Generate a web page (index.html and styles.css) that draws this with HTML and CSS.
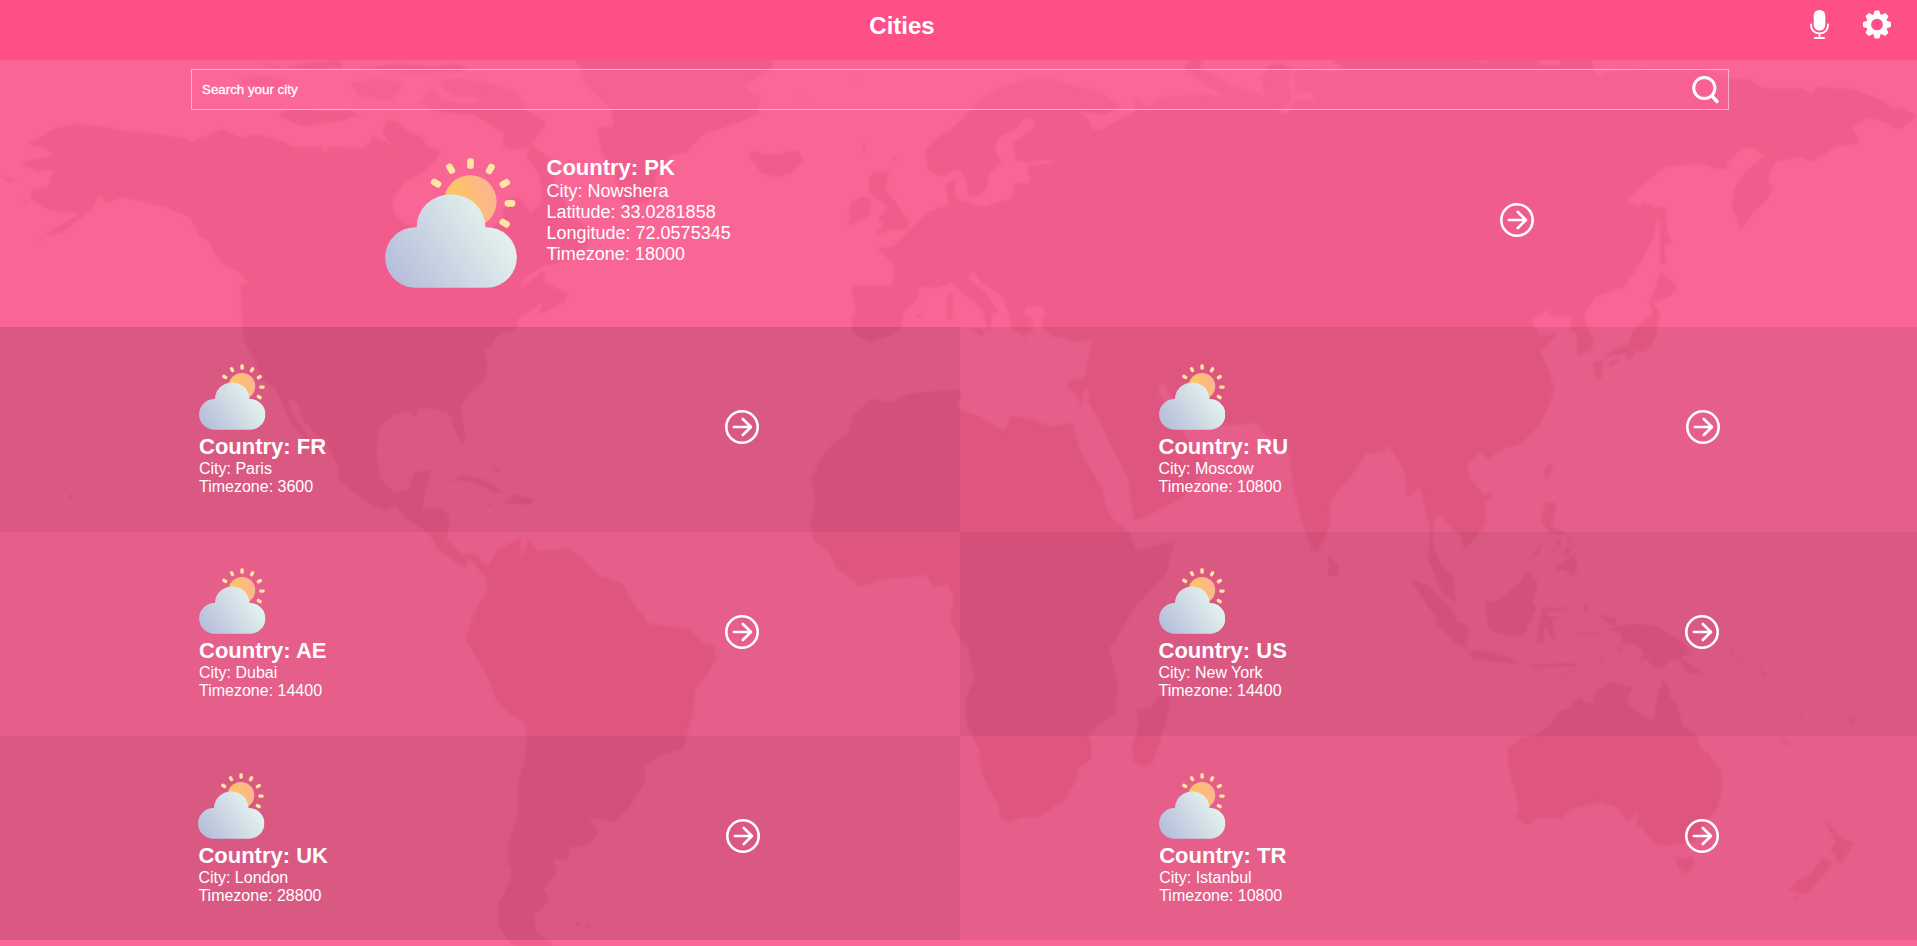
FILE: index.html
```html
<!DOCTYPE html>
<html lang="en">
<head>
<meta charset="utf-8">
<title>Cities</title>
<link rel="stylesheet" href="styles.css">
</head>
<body>
<svg class="defs" width="0" height="0" aria-hidden="true">
  <defs>
    <linearGradient id="sunFill" x1="0" y1="0.6" x2="1" y2="0.3"><stop offset="0.1" stop-color="#fcc75c"/><stop offset="0.9" stop-color="#fcb68e"/></linearGradient>
    <linearGradient id="cloudFill" gradientUnits="userSpaceOnUse" x1="50" y1="380" x2="330" y2="190"><stop offset="0" stop-color="#b7bfdb"/><stop offset="1" stop-color="#e2f1ed"/></linearGradient>
    <symbol id="weather" viewBox="0 0 396 389">
      <g fill="#fde7a2">
        <rect id="ray" x="246.5" y="0" width="20" height="32" rx="8.5"/>
        <use href="#ray" transform="rotate(-60 256 135)"/>
        <use href="#ray" transform="rotate(-30 256 135)"/>
        <use href="#ray" transform="rotate(30 256 135)"/>
        <use href="#ray" transform="rotate(60 256 135)"/>
        <use href="#ray" transform="rotate(90 256 135)"/>
        <use href="#ray" transform="rotate(120 256 135)"/>
      </g>
      <circle cx="256" cy="130" r="79" fill="url(#sunFill)"/>
      <path fill="url(#cloudFill)" d="M88 389A91 91 0 0 1 95 207A103 99 0 0 1 301 207A91 91 0 0 1 308 389Z"/>
    </symbol>
    <symbol id="arrow" viewBox="0 0 34 34">
      <g fill="none" stroke="#fff" stroke-width="2.6" stroke-linecap="round" stroke-linejoin="round"><circle cx="17" cy="17" r="15.7"/><path d="M8.8 17H25.5M17.8 9L26 17L17.8 25"/></g>
    </symbol>
  </defs>
</svg>

<div class="page">
  <svg class="map" viewBox="0 0 1917 946" aria-hidden="true">
    <!-- north-west: Alaska, Canada, Greenland edge -->
    <g transform="scale(.40816 .33333)">
      <path d="M65 430L100 410L130 388L190 372L240 378L300 392L370 400L450 415L470 426L525 392L480 425L545 388L590 414L625 402L700 428L715 442L790 440L798 468L802 440L890 444L905 428L915 410L945 425L960 440L935 390L950 362L975 365L1000 395L1035 410L1045 440L1080 450L1070 480L1030 520L990 550L960 600L965 640L990 668L1050 690L1200 690L1230 660L1240 600L1270 590L1300 640L1330 600L1320 520L1290 470L1300 430L1350 480L1360 560L1400 640L1450 700L1440 735L1400 780L1330 800L1290 830L1260 880L1330 812L1338 850L1390 880L1385 905L1320 945L1330 905L1260 965L1258 992L595 992L588 855L608 850L585 815L540 790L510 720L490 710L465 650L400 620L320 598L300 590L265 610L245 585L225 630L180 670L150 700L130 700L92 722L140 680L200 640L150 635L110 625L78 600L75 570L120 560L130 510L90 515L50 490L130 465L100 440Z"/>
      <path d="M1410 150L1410 180L1440 260L1490 320L1500 345L1502 380L1460 385L1475 460L1510 540L1520 600L1545 630L1580 600L1580 150Z"/>
      <path d="M610 180L680 205L740 190L830 178L840 205L760 208L690 200ZM880 205L980 190L1060 200L1110 190L1145 200L1130 215L1000 218ZM680 345L720 322L800 335L860 330L880 345L830 365L740 378L710 362ZM590 240L640 225L700 240L720 280L650 270ZM860 250L930 235L990 250L960 300L880 290ZM1030 310L1070 335L1160 345L1235 400L1232 440L1250 450L1300 440L1370 490L1350 492L1290 440L1310 420L1340 370L1290 330L1270 280L1200 250L1120 235L1070 245L1110 290L1180 290L1160 315L1080 300L1060 260ZM0 530L40 540L20 545ZM55 600L75 605L60 610Z"/>
    </g>
    <!-- north: Greenland, Iceland, Europe, west Asia -->
    <g transform="translate(640 0) scale(.40816 .33333)">
      <path d="M-10 150L320 150L328 200L265 250L262 275L295 290L290 345L200 385L160 400L130 435L110 460L75 465L40 520L35 590L10 610L-10 580ZM265 470L285 450L300 465L345 462L385 448L400 485L370 520L335 532L295 518L285 495ZM560 530L575 515L612 518L600 570L630 610L645 645L662 660L655 690L610 690L570 710L600 672L580 660L605 620L560 575ZM515 610L545 590L568 600L560 650L510 678ZM395 290L412 296L400 298ZM520 235L538 232L530 240ZM620 475L630 465L625 485ZM545 435L555 435L550 455Z"/>
      <path d="M700 450L720 420L760 390L800 345L830 300L880 265L940 240L1000 235L1060 255L1130 280L1180 320L1140 345L1075 335L1100 360L1110 388L1130 390L1165 365L1210 335L1215 295L1240 320L1280 290L1390 285L1430 290L1385 250L1330 205L1350 178L1380 178L1370 205L1440 250L1535 290L1520 240L1540 195L1580 190L1580 995L990 995L990 920L950 920L940 935L965 995L915 995L900 930L885 885L835 850L815 810L803 835L850 880L880 940L865 940L855 995L845 960L840 930L790 880L765 845L730 865L700 860L685 865L680 900L650 930L635 995L518 995L528 930L518 870L530 855L618 858L625 800L600 765L580 745L620 740L660 690L700 640L755 615L750 550L778 540L770 570L780 600L840 620L912 595L915 550L955 550L950 500L1020 485L1010 478L950 490L920 480L915 430L965 385L970 360L940 355L920 390L880 410L868 440L885 490L855 520L850 560L830 590L805 590L800 540L780 505L740 530L705 510ZM755 880L765 880L765 955L752 960ZM675 945L695 940L680 955Z"/>
    </g>
    <!-- north-east: Siberia, Kamchatka, China -->
    <g transform="translate(1277 0) scale(.40816 .33333)">
      <path d="M-5 190L50 205L135 210L135 160L770 160L775 205L790 232L810 215L900 205L1040 205L1110 235L1160 240L1190 265L1290 265L1310 283L1320 262L1410 267L1480 300L1510 325L1530 325L1567 348L1530 385L1510 385L1490 365L1450 355L1410 380L1428 430L1370 440L1310 485L1280 470L1220 488L1200 540L1218 560L1200 600L1165 640L1135 690L1115 620L1120 570L1145 520L1200 460L1232 430L1190 465L1170 445L1140 445L1100 490L1110 505L1080 508L1040 490L950 500L855 600L885 620L900 605L940 630L920 720L890 790L850 860L815 875L780 890L750 945L765 995L-5 995ZM935 620L955 620L955 690L968 730L948 740L955 790L940 795L938 740ZM940 815L983 860L960 890L920 905L938 940L930 995L905 995L920 940L912 900L925 870Z"/>
      <path class="sea" d="M15 180L135 180L160 207L130 214L48 198L42 240L50 282L88 276L97 305L50 302L25 338L3 342L36 300L28 245L38 205ZM475 178L525 180L510 185ZM635 178L695 178L690 195L650 195ZM625 960L675 920L665 945L720 950L718 995L620 995Z"/>
    </g>
    <!-- west: United States, Mexico, Caribbean, Colombia -->
    <g transform="translate(0 320) scale(.40816 .33333)">
      <path d="M590 -10L600 70L625 120L640 180L675 205L700 280L720 320L770 385L775 420L780 395L745 330L715 280L708 238L730 250L740 300L780 350L808 390L828 440L828 480L860 510L900 545L938 572L970 560L1000 600L1050 640L1075 690L1110 720L1140 745L1150 715L1190 770L1195 810L1170 860L1150 920L1140 970L1580 970L1580 890L1550 850L1525 790L1470 770L1430 720L1390 685L1320 695L1295 660L1290 680L1275 712L1275 655L1220 690L1195 740L1160 700L1130 705L1095 660L1102 590L1080 562L1035 568L1045 500L1057 450L1015 455L1000 510L965 515L935 480L922 400L930 320L965 285L1000 275L1020 290L1025 268L1060 265L1100 280L1110 320L1130 370L1142 360L1128 260L1150 220L1190 175L1195 130L1185 75L1200 90L1220 45L1270 22L1262 -10Z"/>
      <path d="M1100 490L1130 465L1180 475L1235 518L1205 515L1170 492L1130 480ZM1235 550L1260 522L1310 538L1300 555ZM1185 545L1208 552L1195 560ZM1325 548L1340 550L1330 557ZM1175 400L1200 395L1180 405ZM1185 425L1195 445L1188 445ZM1205 435L1225 450L1215 460ZM115 478L122 485L118 490ZM150 495L170 505L155 507ZM172 520L182 535L170 540Z"/>
    </g>
    <!-- centre: Brazil edge, Africa, Arabia, India -->
    <g transform="translate(640 320) scale(.40816 .33333)">
      <path d="M-10 875L20 910L60 930L100 930L150 970L-10 970ZM518 -10L525 45L565 68L620 45L642 -10ZM805 25L840 30L840 52ZM910 -10L945 62L940 20L965 10L960 -10ZM985 -10L985 20L1010 50L1040 50L1060 68L1110 55L1100 110L1090 175L1050 182L1045 200L1065 215L1080 255L1085 215L1100 205L1100 250L1130 310L1160 390L1195 470L1210 600L1250 585L1330 530L1370 470L1385 430L1340 360L1300 270L1270 220L1270 195L1285 190L1300 230L1340 280L1400 330L1430 315L1510 310L1530 340L1580 370L1580 -10Z"/>
      <path d="M565 235L610 247L660 220L780 208L788 225L775 265L830 290L890 332L910 288L960 300L1010 322L1060 310L1080 400L1130 500L1140 560L1160 600L1200 640L1215 690L1310 663L1290 760L1215 860L1160 970L790 970L760 900L770 830L755 795L720 798L700 765L590 778L540 800L480 740L465 700L425 660L415 610L430 540L418 480L440 420L470 375L510 340L520 290ZM1340 652L1358 652L1345 658Z"/>
    </g>
    <!-- east: India, south-east Asia, Japan -->
    <g transform="translate(1277 320) scale(.40816 .33333)">
      <path d="M-5 -10L620 -10L640 45L685 42L645 95L665 150L680 205L665 260L640 320L600 370L545 390L520 418L500 395L465 430L475 480L505 525L530 520L510 550L510 610L490 650L457 690L450 650L430 630L400 580L385 600L380 660L400 730L432 770L440 852L405 820L370 720L375 620L350 500L325 530L315 520L315 460L275 375L260 395L220 400L180 470L130 540L128 620L100 700L85 690L60 600L40 500L30 400L-5 370ZM720 -10L745 -10L775 60L770 90L735 108L735 50ZM905 -10L932 -10L925 60L900 95L880 90L860 125L855 103L800 110L830 85L860 75L870 40ZM775 130L800 120L795 175L785 182ZM812 130L838 112L832 130L815 142ZM653 450L678 425L662 482ZM125 700L152 740L148 770L125 768Z"/>
      <path d="M658 548L682 548L680 590L670 620L705 635L700 645L665 640L648 600ZM612 728L655 655L640 700ZM680 650L695 665L690 685ZM705 640L725 665L715 670ZM675 680L690 700L680 700ZM712 680L720 690L705 715L700 705ZM680 750L695 728L728 705L738 745L725 775L705 750ZM325 775L350 785L380 805L430 870L440 900L470 930L465 970L435 970L370 860ZM508 845L545 840L600 780L612 750L640 790L625 850L637 862L605 950L560 945L520 930ZM650 860L700 865L718 850L705 873L660 872L665 890L695 890L675 905L685 970L670 930L655 900L650 970L635 970ZM750 850L765 855L755 885ZM785 880L830 895L835 915L815 915ZM845 945L870 940L885 912L930 930L990 970L840 970ZM705 910L725 908L710 915ZM735 940L790 935L785 945L740 945ZM330 820L345 840L335 835ZM355 875L370 905L360 895ZM460 910L475 930L465 930Z"/>
    </g>
    <!-- south-west: South America -->
    <g transform="translate(0 626) scale(.40816 .33333)">
      <path d="M1155 -10L1145 40L1160 80L1195 150L1215 220L1235 250L1285 290L1292 330L1285 400L1270 460L1270 560L1245 650L1242 700L1255 740L1235 800L1220 830L1222 900L1240 935L1265 970L1360 970L1350 950L1315 920L1308 870L1348 820L1330 790L1365 740L1355 700L1390 702L1395 665L1440 660L1468 625L1445 575L1500 590L1540 550L1580 470L1580 -10ZM1402 895L1425 885L1420 900ZM1430 910L1450 885L1445 905Z"/>
    </g>
    <!-- south: Brazil edge, southern Africa, Madagascar -->
    <g transform="translate(640 626) scale(.40816 .33333)">
      <path d="M-10 -10L120 10L150 50L180 60L187 100L160 150L135 190L130 260L105 370L60 385L10 420L0 480L-10 490ZM765 -10L800 60L820 150L795 230L800 290L830 370L840 450L880 540L885 580L905 590L930 575L980 570L1040 520L1070 460L1070 430L1105 400L1105 350L1098 325L1165 260L1172 180L1150 70L1180 -10ZM1270 210L1298 208L1298 250L1275 340L1255 410L1235 423L1210 405L1205 360L1220 300L1218 250L1250 248Z"/>
    </g>
    <!-- south-east: Indonesia, Australia, New Zealand -->
    <g transform="translate(1277 626) scale(.40816 .33333)">
      <path d="M385 -10L465 -10L467 65L450 60L400 5ZM520 -10L605 -10L600 30L530 20ZM640 -10L655 60L655 0L688 60L670 -10ZM465 75L500 72L570 95L608 115L550 110L480 98ZM610 118L680 112L740 110L720 122L630 125ZM690 155L740 115L720 140ZM638 135L660 145L650 145ZM730 20L790 20L750 28ZM835 60L845 60L838 88ZM790 95L803 95L798 108ZM810 5L860 -5L920 -5L985 40L1015 80L990 95L1050 150L1010 140L980 100L960 105L945 130L920 122L905 100L885 110L900 80L860 35Z"/>
      <path d="M565 370L600 335L635 325L670 300L685 260L715 245L740 212L760 235L775 225L778 195L800 180L820 168L872 185L855 225L880 255L922 283L930 220L945 155L958 180L965 220L978 225L995 300L1028 330L1035 370L1055 380L1085 430L1092 475L1080 540L1045 600L1020 650L980 650L960 660L920 650L895 600L880 600L885 555L860 588L835 545L790 527L750 540L720 550L700 575L640 575L615 597L585 578L595 550L575 460L568 420ZM975 692L1000 700L1020 690L1020 725L1000 745L985 725ZM1340 580L1360 605L1375 630L1395 645L1415 645L1400 675L1385 710L1368 708L1370 685L1355 672L1370 650ZM1335 695L1360 710L1340 745L1320 770L1300 805L1255 792L1275 765L1310 745ZM1105 55L1118 85L1112 85ZM1128 95L1150 118L1135 110ZM1165 100L1175 115L1168 112ZM1180 115L1205 155L1192 148ZM1225 320L1265 365L1245 350ZM1260 230L1275 240L1268 240ZM1280 235L1285 280L1280 270ZM1405 270L1418 285L1405 290ZM1420 262L1435 255L1428 265ZM1270 810L1278 812L1272 825Z"/>
    </g>
  </svg>

  <header class="topbar">
    <h1 class="title">Cities</h1>
    <div class="tools">
      <svg class="mic" viewBox="0 0 19 29"><rect x="3.7" y="0" width="11.6" height="20.6" rx="5.5" fill="#fff"/><path fill="none" stroke="#fff" stroke-width="1.9" stroke-linecap="round" d="M1 14.5C1 20.6 5 23.4 9.5 23.4S18 20.6 18 14.5M9.5 23.6V28M4.8 28H14.2"/></svg>
      <svg class="gear" viewBox="-14.3 -14.5 28.6 29">
        <mask id="hub" maskUnits="userSpaceOnUse" x="-15" y="-15" width="30" height="30"><rect x="-15" y="-15" width="30" height="30" fill="#fff"/><circle r="6" fill="#000"/></mask>
        <g fill="#fff" mask="url(#hub)">
          <circle r="10.8"/>
          <path id="tooth" d="M-4 -9L-2.7 -13.4Q-2.5 -14.3 -1.6 -14.3H1.6Q2.5 -14.3 2.7 -13.4L4 -9V9L2.7 13.4Q2.5 14.3 1.6 14.3H-1.6Q-2.5 14.3 -2.7 13.4L-4 9Z"/>
          <use href="#tooth" transform="rotate(45)"/><use href="#tooth" transform="rotate(90)"/><use href="#tooth" transform="rotate(135)"/>
        </g>
      </svg>
    </div>
  </header>

  <section class="current">
    <div class="search">
      <input class="field" type="text" placeholder="Search your city">
      <svg class="lens" viewBox="0 0 28 28"><g fill="none" stroke="#fff" stroke-width="3"><circle cx="12.3" cy="12" r="10.6"/><path stroke-width="3.4" stroke-linecap="round" d="M20 20L25 25.5"/></g></svg>
    </div>
    <div class="hero">
      <svg class="hero-icon"><use href="#weather"/></svg>
      <div class="info large"><h2>Country: PK</h2><p>City: Nowshera</p><p>Latitude: 33.0281858</p><p>Longitude: 72.0575345</p><p>Timezone: 18000</p></div>
      <svg class="arrow"><use href="#arrow"/></svg>
    </div>
  </section>

  <section class="cities">
    <article class="city dark"><div class="info"><svg class="icon"><use href="#weather"/></svg><h2>Country: FR</h2><p>City: Paris</p><p>Timezone: 3600</p></div><svg class="arrow"><use href="#arrow"/></svg></article>
    <article class="city"><div class="info"><svg class="icon"><use href="#weather"/></svg><h2>Country: RU</h2><p>City: Moscow</p><p>Timezone: 10800</p></div><svg class="arrow"><use href="#arrow"/></svg></article>
    <article class="city middle"><div class="info"><svg class="icon"><use href="#weather"/></svg><h2>Country: AE</h2><p>City: Dubai</p><p>Timezone: 14400</p></div><svg class="arrow"><use href="#arrow"/></svg></article>
    <article class="city dark middle"><div class="info"><svg class="icon"><use href="#weather"/></svg><h2>Country: US</h2><p>City: New York</p><p>Timezone: 14400</p></div><svg class="arrow"><use href="#arrow"/></svg></article>
    <article class="city dark last"><div class="info"><svg class="icon"><use href="#weather"/></svg><h2>Country: UK</h2><p>City: London</p><p>Timezone: 28800</p></div><svg class="arrow"><use href="#arrow"/></svg></article>
    <article class="city last"><div class="info"><svg class="icon"><use href="#weather"/></svg><h2>Country: TR</h2><p>City: Istanbul</p><p>Timezone: 10800</p></div><svg class="arrow"><use href="#arrow"/></svg></article>
  </section>
</div>
</body>
</html>
```

FILE: styles.css
```css
* { box-sizing: border-box; margin: 0; padding: 0; }
body { background: #f96696; color: #fff; font-family: Arial, "Liberation Sans", sans-serif; overflow: hidden; }
svg { display: block; flex: none; }
.defs { position: absolute; }
.page { position: relative; width: 1917px; height: 946px; overflow: hidden; isolation: isolate; }
.map { position: absolute; inset: 0; width: 1917px; height: 946px; z-index: -1; fill: #f05c8b; filter: blur(.8px); }
.sea { fill: #f96696; }

.topbar { display: grid; grid-template-columns: 1fr auto 1fr; height: 60px; padding: 10px 26px 0 0; background: #ff4f87; }
.title { grid-column: 2; margin-right: 87px; font-size: 24px; line-height: 31px; }
.tools { display: flex; justify-content: flex-end; gap: 34px; }
.mic { width: 19px; height: 29px; overflow: visible; }
.gear { width: 28px; height: 29px; }

.current { height: 267px; padding-top: 9px; }
.search { display: flex; align-items: center; width: 1538px; height: 41px; margin-left: 191px; padding: 0 8px 0 10px; border: 1px solid rgba(255, 255, 255, .5); background: rgba(255, 104, 154, .4); }
.field { flex: 1; border: 0; outline: 0; background: none; color: #fff; font: 13.333px Arial, "Liberation Sans", sans-serif; -webkit-text-stroke: .3px #fff; }
.field::placeholder { color: #fff; opacity: 1; }
.lens { width: 28px; height: 28px; margin-top: 1px; }

.hero { display: flex; padding: 46px 383px 0 385px; }
.hero-icon { width: 132px; height: 130px; margin-top: 2px; }
.large { margin-left: 29.5px; }
.hero .arrow { margin: 47px 0 0 auto; }

.info h2 { font-size: 22px; line-height: 26px; }
.info p { font-size: 16px; line-height: 18px; }
.info.large h2 { margin-top: -1px; }
.info.large p { font-size: 18px; line-height: 21px; }

.cities { display: grid; grid-template-columns: 960px 957px; grid-template-rows: 205px 204px 204px; }
.city { display: flex; justify-content: space-between; padding: 37px 201px 0 199px; background: rgba(0, 0, 0, .075); }
.city:nth-child(even) { padding: 37px 197px 0 198.5px; }
.city.middle { padding-top: 36px; }
.city.middle:nth-child(even), .city.last:nth-child(even) { padding-right: 198px; }
.city.last:nth-child(odd) { padding: 37px 200px 0 198.4px; }
.city.last:nth-child(even) { padding-left: 199.2px; }
.city.dark { background: rgba(0, 0, 0, .12); }
.icon { width: 66.5px; height: 66px; margin-bottom: 4px; }
.arrow { width: 34px; height: 34px; }
.city .arrow { margin-top: 46px; }
.city.middle .arrow { margin-top: 47px; }
```
